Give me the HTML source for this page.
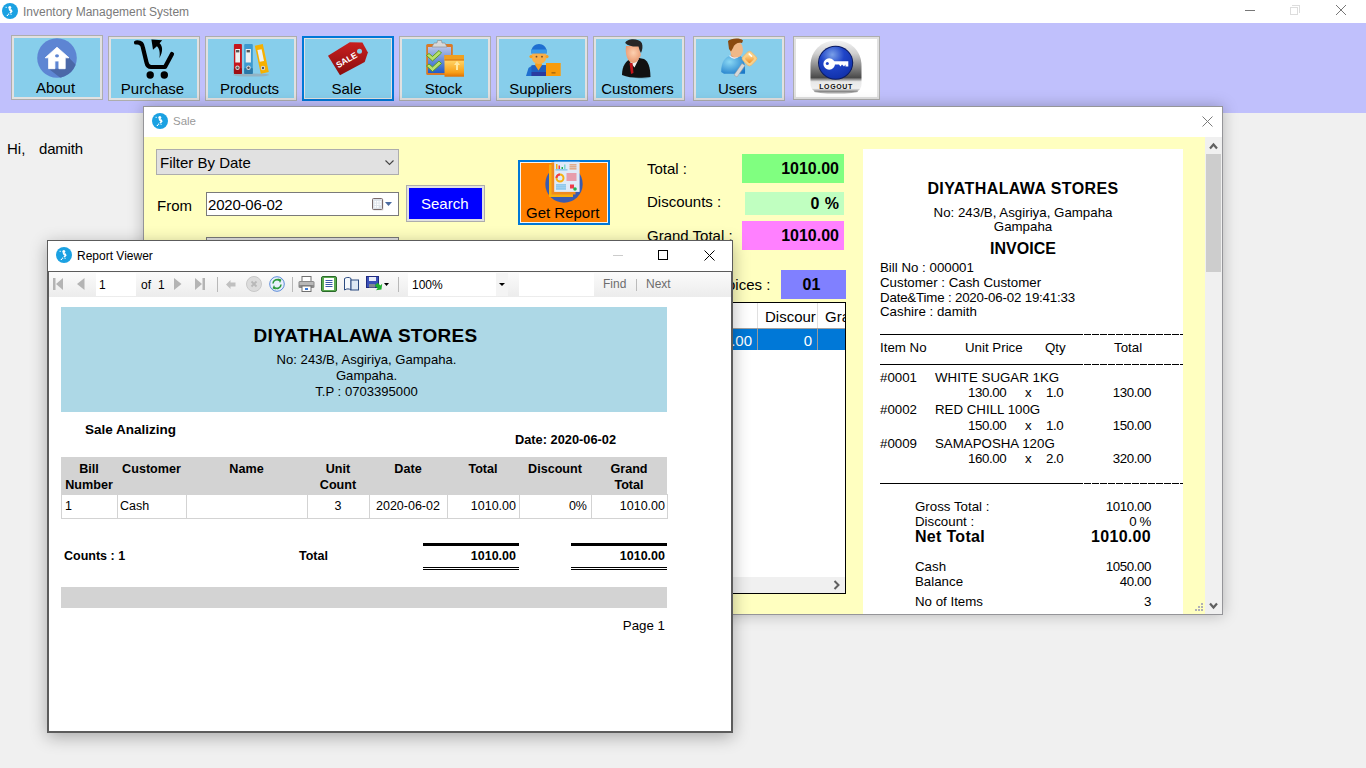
<!DOCTYPE html>
<html><head><meta charset="utf-8">
<style>
*{margin:0;padding:0;box-sizing:border-box}
html,body{width:1366px;height:768px;overflow:hidden;background:#f0f0f0;font-family:"Liberation Sans",sans-serif;position:relative}
.a{position:absolute}
.t{position:absolute;white-space:nowrap;line-height:1}
#titlebar{left:0;top:0;width:1366px;height:23px;background:#fff}
#toolbar{left:0;top:23px;width:1366px;height:90px;background:#c0c0fc}
.btn{position:absolute;top:36px;width:92px;height:65px;background:#87ceeb;border:1px solid #adadad;box-shadow:inset 0 0 0 2px #e1e1e1}
.btn .lbl{position:absolute;left:-3px;right:0;text-align:center;top:44px;font-size:15px;color:#000;line-height:1}
.win{position:absolute;background:#fff}
</style></head><body>
<!-- main title bar -->
<div id="titlebar" class="a">
  <svg class="a" style="left:2px;top:3px" width="16" height="16"><circle cx="8" cy="8" r="8" fill="#1ba1e2"/><g fill="#fff"><circle cx="7.8" cy="4.6" r="1.5"/><rect x="3.6" y="3.8" width="1.1" height="1.1"/><path d="M6.6 5.8L9.8 6.4L10.6 8.6L8.8 10.4L7.4 9.8L8.6 8.4L7.2 7.6Z"/><rect x="6" y="10.6" width="1.2" height="1.2"/><rect x="4.8" y="11.8" width="1.2" height="1.2"/><rect x="8.6" y="10.8" width="1" height="1"/></g></svg>
  <div class="t" style="left:23px;top:6px;font-size:12px;color:#7a7a7a">Inventory Management System</div>
  <div class="a" style="left:1245px;top:10px;width:10px;height:1px;background:#777"></div>
  <div class="a" style="left:1290px;top:7px;width:8px;height:8px;border:1px solid #ddd"></div>
  <div class="a" style="left:1292px;top:5px;width:8px;height:8px;border-top:1px solid #ddd;border-right:1px solid #ddd"></div>
  <svg class="a" style="left:1336px;top:5px" width="10" height="10"><path d="M0 0L10 10M10 0L0 10" stroke="#777" stroke-width="1"/></svg>
</div>
<div id="toolbar" class="a"></div>
<div class="btn" style="left:11px;top:35px"><div class="lbl">About</div></div>
<div class="btn" style="left:108px"><div class="lbl">Purchase</div></div>
<div class="btn" style="left:205px"><div class="lbl">Products</div></div>
<div class="btn" style="left:302px;border:2px solid #0078d7;box-shadow:inset 0 0 0 1px #e1e1e1"><div class="lbl" style="top:43px">Sale</div></div>
<div class="btn" style="left:399px"><div class="lbl">Stock</div></div>
<div class="btn" style="left:496px"><div class="lbl">Suppliers</div></div>
<div class="btn" style="left:593px"><div class="lbl">Customers</div></div>
<div class="btn" style="left:693px"><div class="lbl">Users</div></div>
<div class="btn" style="left:793px;width:87px;height:64px;background:#fff"></div>


<!-- ICONS -->
<svg class="a" style="left:37px;top:38px" width="40" height="40" viewBox="0 0 40 40">
 <defs><clipPath id="hc"><circle cx="20" cy="20" r="19.8"/></clipPath></defs>
 <circle cx="20" cy="20" r="19.8" fill="#5d85d3"/>
 <path clip-path="url(#hc)" d="M28.2 19.8L32 19.8L45 33L45 45L30 45L11.6 30.7L28.2 30.7Z" fill="#4b68a8"/>
 <path d="M20 9.2L8.2 19.8L11.6 19.8L11.6 30.7L17.9 30.7L17.9 23L21.9 23L21.9 30.7L28.2 30.7L28.2 19.8L32 19.8Z" fill="#fff" stroke="#fff" stroke-width="0.8" stroke-linejoin="round"/>
 <ellipse cx="20" cy="17.8" rx="2" ry="1.6" fill="#5d85d3"/>
</svg>
<svg class="a" style="left:130px;top:37px" width="48" height="44" viewBox="0 0 48 44">
 <path d="M6 5.5C10 5 12.5 7 13 11L16.5 25.5C17.2 28.8 18.5 30 21 30L35 30L42 17" fill="none" stroke="#000" stroke-width="4.2" stroke-linecap="round" stroke-linejoin="round"/>
 <circle cx="20.2" cy="38" r="3.7" fill="#000"/>
 <circle cx="34.3" cy="38" r="3.7" fill="#000"/>
 <path d="M21.4 2.4L32.2 3.3L29.6 6.3C32.5 9 33.5 14 29.4 21.3C30.5 15 29 11 26.9 9.3L23 12.8Z" fill="#000"/>
</svg>
<svg class="a" style="left:230px;top:42px" width="44" height="36" viewBox="0 0 44 36">
 <ellipse cx="21" cy="33" rx="18" ry="1.6" fill="#9aa8b0" opacity="0.7"/>
 <rect x="3.9" y="2" width="8" height="30" rx="1" fill="#c5161c"/>
 <rect x="3.9" y="26" width="8" height="6" rx="1" fill="#9e0f14"/>
 <rect x="5.3" y="7" width="4.7" height="13.5" fill="#eef0f0"/>
 <rect x="6" y="8" width="3.3" height="2.4" fill="#555"/>
 <circle cx="7.5" cy="25.8" r="2.2" fill="#ddd"/><circle cx="7.5" cy="25.8" r="1.2" fill="#555"/>
 <rect x="14.2" y="2" width="8.6" height="30" rx="1" fill="#3d9ad0"/>
 <rect x="14.2" y="26" width="8.6" height="6" rx="1" fill="#2a78a8"/>
 <rect x="15.7" y="7" width="5.2" height="13.5" fill="#eef0f0"/>
 <rect x="16.6" y="8" width="3.3" height="2.4" fill="#555"/>
 <circle cx="18.5" cy="25.8" r="2.2" fill="#ddd"/><circle cx="18.5" cy="25.8" r="1.2" fill="#555"/>
 <path d="M24.8 3.7L32.8 2L38.8 30.1L30.8 31.8Z" fill="#f6b000"/>
 <path d="M27.4 8L31.6 7.2L34 19L29.8 19.8Z" fill="#eef0f0"/>
 <circle cx="33" cy="26" r="2.2" fill="#ddd"/><circle cx="33" cy="26" r="1.2" fill="#555"/>
</svg>
<svg class="a" style="left:326px;top:40px" width="44" height="38" viewBox="0 0 44 38">
 <defs><linearGradient id="tg" x1="0" y1="0" x2="0" y2="1"><stop offset="0" stop-color="#c82020"/><stop offset="1" stop-color="#8a0c0c"/></linearGradient></defs>
 <path d="M2 15.8L23.8 2.3L36.4 2.6L41.9 12.6L38.7 22.1L14 35.3Z" fill="url(#tg)"/>
 <circle cx="33.5" cy="11.2" r="2.5" fill="#87ceeb"/>
 <text x="20" y="23" transform="rotate(-30 20 19)" font-family="Liberation Sans" font-weight="bold" font-size="8.5" fill="#fff" text-anchor="middle">SALE</text>
</svg>
<svg class="a" style="left:424px;top:38px" width="44" height="42" viewBox="0 0 44 42">
 <defs><linearGradient id="cb" x1="0" y1="0" x2="0" y2="1"><stop offset="0" stop-color="#b8c4e8"/><stop offset="1" stop-color="#1f5cc8"/></linearGradient>
 <linearGradient id="bx" x1="0" y1="0" x2="0" y2="1"><stop offset="0" stop-color="#f08a10"/><stop offset="0.3" stop-color="#ffd060"/><stop offset="0.8" stop-color="#f8a018"/><stop offset="1" stop-color="#e07000"/></linearGradient></defs>
 <rect x="2.2" y="6" width="26.6" height="31" rx="1.5" fill="#d87a28"/>
 <rect x="4" y="9" width="23" height="26" fill="url(#cb)"/>
 <path d="M8 9L10 5L13 5L13.5 2.5L17.5 2.5L18 5L21 5L23 9Z" fill="#d8d8d8" stroke="#888" stroke-width="0.6"/>
 <path d="M5 15.5L8.5 18.5L15 12.5L17.5 15L8.5 23L2.5 17.5Z" fill="#b8e070" stroke="#5a9a10" stroke-width="0.9"/>
 <path d="M5 26L8.5 29L15 23L17.5 25.5L8.5 33.5L2.5 28Z" fill="#b8e070" stroke="#5a9a10" stroke-width="0.9"/>
 <rect x="20.5" y="17" width="19.5" height="21.7" fill="url(#bx)"/><rect x="20.5" y="17" width="19.5" height="5" fill="#f0a020"/><rect x="20.5" y="21.5" width="19.5" height="1" fill="#d07010"/>
 <path d="M33 23L36 27L34 27L34 32L32 32L32 27L30 27Z" fill="#ffe8a0"/>
</svg>
<svg class="a" style="left:524px;top:39px" width="40" height="38" viewBox="0 0 40 38">
 <path d="M2 37L4.5 29C6 27.3 9 26.4 11 26.2L22 26.2L22 37Z" fill="#1f6fd0"/>
 <rect x="7.5" y="26.2" width="14.5" height="10.8" fill="#1f5ec0"/>
 <rect x="7.5" y="33" width="14.5" height="4" fill="#2a3aa0"/>
 <path d="M11 26L14.5 31.5L18 26L17 22L12 22Z" fill="#f7a020"/>
 <ellipse cx="15" cy="19" rx="7.2" ry="6" fill="#f8b04a"/>
 <rect x="7.8" y="14.5" width="14.4" height="5" fill="#f8b04a"/>
 <circle cx="7" cy="17.6" r="1.6" fill="#f7a020"/><circle cx="23" cy="17.6" r="1.6" fill="#f7a020"/>
 <path d="M7 14.3C7 2 23 2 23 14.3Z" fill="#1f6fd0"/>
 <rect x="7" y="10.5" width="16" height="3.8" fill="#3a9ae8"/>
 <circle cx="12.5" cy="17.7" r="0.9" fill="#6b4a2a"/><circle cx="18" cy="17.7" r="0.9" fill="#6b4a2a"/>
 <rect x="22" y="24" width="14.7" height="13" fill="#f99c0c"/>
 <rect x="27.5" y="33.5" width="4" height="0.8" fill="#6a4010"/>
</svg>
<svg class="a" style="left:620px;top:38px" width="34" height="41" viewBox="0 0 34 41">
 <defs><radialGradient id="fc" cx="0.5" cy="0.4" r="0.6"><stop offset="0" stop-color="#fcd0b0"/><stop offset="1" stop-color="#e89870"/></radialGradient></defs>
 <ellipse cx="22" cy="38.5" rx="9" ry="2" fill="#3a6070" opacity="0.35"/>
 <path d="M2 37C2 28 6 22 12 20.5L19 20L24 21C28 23 30.5 29 30.4 39C22 40 10 40.5 2 37Z" fill="#111"/>
 <path d="M10 24L14 21.5L19 20.5L14.5 29.5Z" fill="#eee"/>
 <path d="M9.5 25L12.5 25L13.5 35L11 36Z" fill="#c0141a"/>
 <path d="M6 8C5 16 7 22 11 24.5C15 26 18 23.5 19 20C21 19 21.5 16 20 14L19 8Z" fill="url(#fc)"/>
 <path d="M5.2 5C7 0 19 0 21.8 5C23 8 22.5 12 21 15C19.5 13 19 10 18.5 8.5C14 9 8 8 5.2 5Z" fill="#262626"/>
</svg>
<svg class="a" style="left:719px;top:38px" width="42" height="40" viewBox="0 0 42 40">
 <defs><radialGradient id="bd" cx="0.35" cy="0.35" r="0.8"><stop offset="0" stop-color="#8ad8f4"/><stop offset="1" stop-color="#1a78c8"/></radialGradient>
 <linearGradient id="ky" x1="0" y1="0" x2="1" y2="1"><stop offset="0" stop-color="#ffe0a0"/><stop offset="1" stop-color="#f08a20"/></linearGradient></defs>
 <path d="M2.2 34C2 24 6 19 12 17.5L20 17.5C25 19.5 26.5 26 26 35.8L5 35.8Z" fill="url(#bd)"/>
 <path d="M11.5 17.5L15 21L19.5 17.5L18 14L13 14Z" fill="#e8a070"/><path d="M10.5 17.6Q15 22.5 20.5 17.6" fill="none" stroke="#e8f0ff" stroke-width="1.2"/>
 <ellipse cx="17.5" cy="11.5" rx="6.5" ry="8" fill="#f0b888"/>
 <path d="M9 3C12 0 21 -0.5 24 2.5L23 5C19 4 15 6 14 10L12 13.5L10 11Z" fill="#8a4a10"/>
 <path d="M15 37L23 25.5L26 27.5L18 39Z" fill="#d8d8d8" stroke="#999" stroke-width="0.5"/>
 <rect x="24.5" y="14.6" width="12" height="12" rx="3" transform="rotate(45 30.5 20.6)" fill="#f8d088" stroke="#f0b060" stroke-width="0.6"/>
 <rect x="27" y="17.1" width="7" height="7" rx="1.2" transform="rotate(45 30.5 20.6)" fill="url(#ky)"/>
 <rect x="29" y="16" width="4.5" height="1.6" transform="rotate(45 31 17)" fill="#fff"/>
</svg>
<svg class="a" style="left:810px;top:40px" width="52" height="54" viewBox="0 0 52 54">
 <defs><linearGradient id="sv" x1="0" y1="0" x2="0" y2="1"><stop offset="0" stop-color="#f4f4f4"/><stop offset="0.25" stop-color="#d0d0d0"/><stop offset="0.55" stop-color="#7a7a7a"/><stop offset="0.72" stop-color="#4a4a4a"/><stop offset="0.8" stop-color="#e8e8e8"/><stop offset="0.93" stop-color="#f0f0f0"/><stop offset="1" stop-color="#7a7a7a"/></linearGradient>
 <radialGradient id="bl" cx="0.4" cy="0.25" r="0.8"><stop offset="0" stop-color="#7aa0e8"/><stop offset="0.45" stop-color="#1f44c8"/><stop offset="1" stop-color="#1030a8"/></radialGradient></defs>
 <ellipse cx="26" cy="51.5" rx="22" ry="2" fill="#555" opacity="0.5"/>
 <path d="M0.5 26C0.5 10 12 0.5 26 0.5C40 0.5 51.5 10 51.5 26L51.5 44C51.5 49 48 52 43 52L9 52C4 52 0.5 49 0.5 44Z" fill="url(#sv)"/>
 <ellipse cx="25.6" cy="22.7" rx="17.6" ry="17" fill="#0a1a60"/>
 <ellipse cx="25.6" cy="22.7" rx="16.6" ry="16" fill="url(#bl)"/>
 <circle cx="19.2" cy="24" r="5.8" fill="#fff"/>
 <circle cx="17.3" cy="23.5" r="1.5" fill="#1f44c8"/>
 <path d="M23 21.3L38.3 21.3L38.3 26.5L35.5 26.5L35.5 24.5L34 26.5L32 24.5L30.5 26.5L29 24.5L23 24.5Z" fill="#fff"/>
 <text x="26" y="49.3" font-family="Liberation Sans" font-weight="bold" font-size="7" letter-spacing="0.6" fill="#111" text-anchor="middle">LOGOUT</text>
</svg>

<div class="t" style="left:7px;top:141px;font-size:15px;color:#000">Hi,</div><div class="t" style="left:39px;top:141px;font-size:15px;color:#000;letter-spacing:-0.2px">damith</div>

<!-- SALE WINDOW -->
<div class="win" id="sale" style="left:143px;top:106px;width:1080px;height:509px;border:1px solid #959599;box-shadow:0 0 14px rgba(0,0,0,0.25)"></div>
<svg class="a" style="left:152px;top:113px" width="16" height="16"><circle cx="8" cy="8" r="8" fill="#1ba1e2"/><g fill="#fff"><circle cx="7.8" cy="4.6" r="1.5"/><rect x="3.6" y="3.8" width="1.1" height="1.1"/><path d="M6.6 5.8L9.8 6.4L10.6 8.6L8.8 10.4L7.4 9.8L8.6 8.4L7.2 7.6Z"/><rect x="6" y="10.6" width="1.2" height="1.2"/><rect x="4.8" y="11.8" width="1.2" height="1.2"/><rect x="8.6" y="10.8" width="1" height="1"/></g></svg>
<div class="t" style="left:173px;top:116px;font-size:11.5px;color:#999">Sale</div>
<svg class="a" style="left:1202px;top:116px" width="11" height="11"><path d="M0.5 0.5L10.5 10.5M10.5 0.5L0.5 10.5" stroke="#7a7a7a" stroke-width="1"/></svg>
<div class="a" style="left:144px;top:137px;width:1061px;height:477px;background:#ffffc0"></div>
<!-- vscroll -->
<div class="a" style="left:1205px;top:137px;width:17px;height:477px;background:#f0f0f0"></div>
<div class="a" style="left:1206px;top:154px;width:15px;height:118px;background:#cdcdcd"></div>
<svg class="a" style="left:1209px;top:142px" width="9" height="8"><path d="M1 6.5L4.5 2.5L8 6.5" stroke="#606060" stroke-width="2.2" fill="none"/></svg>
<svg class="a" style="left:1209px;top:602px" width="9" height="8"><path d="M1 1.5L4.5 5.5L8 1.5" stroke="#606060" stroke-width="2.2" fill="none"/></svg>
<!-- controls -->
<div class="a" style="left:156px;top:149px;width:243px;height:26px;background:#e1e1e1;border:1px solid #adadad"></div>
<div class="t" style="left:160px;top:155px;font-size:15px">Filter By Date</div>
<svg class="a" style="left:385px;top:160px" width="10" height="6"><path d="M0.5 0.5L4.5 4.5L8.5 0.5" stroke="#444" stroke-width="1.1" fill="none"/></svg>
<div class="t" style="left:157px;top:198px;font-size:15px">From</div>
<div class="a" style="left:206px;top:192px;width:193px;height:24px;background:#fff;border:1px solid #7a7a7a"></div>
<div class="t" style="left:208px;top:197px;font-size:15px;letter-spacing:-0.2px">2020-06-02</div>
<svg class="a" style="left:372px;top:198px" width="12" height="13"><rect x="1" y="1" width="10.5" height="11.5" rx="1" fill="#c8c8c8" opacity="0.6"/><rect x="0.5" y="0.5" width="10" height="11" rx="1" fill="#dde3ea" stroke="#7a6a6a"/><g fill="#fff"><rect x="2.5" y="3" width="1.6" height="1.6"/><rect x="5" y="3" width="1.6" height="1.6"/><rect x="7.5" y="3" width="1.6" height="1.6"/><rect x="2.5" y="5.5" width="1.6" height="1.6"/><rect x="5" y="5.5" width="1.6" height="1.6"/><rect x="7.5" y="5.5" width="1.6" height="1.6"/><rect x="2.5" y="8" width="1.6" height="1.6"/><rect x="5" y="8" width="1.6" height="1.6"/></g></svg>
<svg class="a" style="left:385px;top:202px" width="7" height="4"><path d="M0 0H7L3.5 4Z" fill="#4a6aa0"/></svg>
<div class="a" style="left:206px;top:237px;width:193px;height:10px;background:#e1e1e1;border:1px solid #7a7a7a"></div>
<div class="a" style="left:406px;top:185px;width:79px;height:37px;background:#e1e1e1;border:1px solid #adadad"></div>
<div class="a" style="left:409px;top:188px;width:73px;height:31px;background:#0000ff"></div>
<div class="t" style="left:421px;top:196px;font-size:15px;color:#fff">Search</div>
<div class="a" style="left:518px;top:160px;width:92px;height:65px;background:#ff8000;border:2px solid #0078d7;box-shadow:inset 0 0 0 1px #f4f4f4"></div>
<div class="t" style="left:526px;top:205px;font-size:15px">Get Report</div>
<svg class="a" style="left:545px;top:161px" width="40" height="42" viewBox="0 0 40 42">
 <circle cx="19" cy="23" r="18.7" fill="#3a5bb0"/>
 <rect x="4" y="3.5" width="24" height="32.5" fill="#f8b010"/>
 <rect x="6.5" y="1.5" width="24" height="32" fill="#f08a20"/>
 <rect x="9.2" y="0.7" width="25.4" height="30.2" fill="#dfeaf8"/>
 <rect x="11" y="3" width="1.5" height="5" fill="#f8b010"/><rect x="13.5" y="4.5" width="1.5" height="3.5" fill="#f03a4a"/><rect x="16.5" y="6" width="1.5" height="2" fill="#20b050"/><rect x="19" y="3.5" width="1.5" height="4.5" fill="#80d8d0"/>
 <rect x="10.5" y="8.5" width="12" height="0.8" fill="#40a8e0"/>
 <rect x="24.5" y="3.5" width="7" height="0.8" fill="#e07020"/><rect x="24.5" y="5.5" width="7" height="0.8" fill="#e07020"/><rect x="24.5" y="7.5" width="7" height="0.8" fill="#e07020"/>
 <circle cx="15" cy="17" r="3.5" fill="none" stroke="#f8b010" stroke-width="2"/>
 <path d="M11.5 17A3.5 3.5 0 0 1 15 13.5" fill="none" stroke="#f03a4a" stroke-width="2"/>
 <rect x="21.5" y="12.5" width="10" height="1" fill="#f05060"/><rect x="21.5" y="14.5" width="10" height="1" fill="#f05060"/><rect x="21.5" y="16.5" width="10" height="1" fill="#f05060"/><rect x="21.5" y="18.5" width="10" height="1" fill="#f05060"/>
 <rect x="11" y="23.5" width="10" height="0.9" fill="#40a8e0"/><rect x="11" y="25.5" width="10" height="0.9" fill="#40a8e0"/><rect x="11" y="27.5" width="10" height="0.9" fill="#40a8e0"/>
 <rect x="25" y="23.5" width="4" height="4" fill="#f03a4a"/><circle cx="30" cy="28" r="1.8" fill="#20b050"/>
</svg>
<!-- totals -->
<div class="t" style="left:647px;top:161px;font-size:15px">Total :</div>
<div class="a" style="left:742px;top:154px;width:102px;height:29px;background:#80ff80"></div>
<div class="t" style="left:742px;width:97px;text-align:right;top:161px;font-size:16px;font-weight:bold">1010.00</div>
<div class="t" style="left:647px;top:194px;font-size:15px">Discounts :</div>
<div class="a" style="left:745px;top:192px;width:99px;height:23px;background:#c0ffc0"></div>
<div class="t" style="left:745px;width:94px;text-align:right;top:196px;font-size:16px;font-weight:bold;word-spacing:1px">0 %</div>
<div class="t" style="left:647px;top:228px;font-size:15px">Grand Total :</div>
<div class="a" style="left:742px;top:221px;width:102px;height:29px;background:#ff80ff"></div>
<div class="t" style="left:742px;width:97px;text-align:right;top:228px;font-size:16px;font-weight:bold">1010.00</div>
<div class="t" style="left:707px;top:277px;font-size:15px">Invoices :</div>
<div class="a" style="left:781px;top:270px;width:65px;height:29px;background:#8080ff"></div>
<div class="t" style="left:779px;width:65px;text-align:center;top:277px;font-size:16px;font-weight:bold">01</div>
<!-- grid -->
<div class="a" style="left:640px;top:302px;width:206px;height:292px;background:#fff;border:1px solid #000"></div>
<div class="a" style="left:641px;top:328px;width:204px;height:1px;background:#a0a0a0"></div>
<div class="a" style="left:757px;top:303px;width:1px;height:25px;background:#e0e0e0"></div>
<div class="a" style="left:817px;top:303px;width:1px;height:25px;background:#e0e0e0"></div>
<div class="t" style="left:765px;top:309px;font-size:15px">Discour</div>
<div class="a" style="left:818px;top:303px;width:27px;height:25px;overflow:hidden"><div class="t" style="left:7px;top:6px;font-size:15px">Gra</div></div>
<div class="a" style="left:641px;top:329px;width:204px;height:21px;background:#0078d7"></div>
<div class="a" style="left:757px;top:329px;width:1px;height:21px;background:#9a9a9a"></div>
<div class="a" style="left:817px;top:329px;width:1px;height:21px;background:#9a9a9a"></div>
<div class="t" style="left:641px;width:111px;text-align:right;top:333px;font-size:15px;color:#fff">1010.00</div>
<div class="t" style="left:758px;width:54px;text-align:right;top:333px;font-size:15px;color:#fff">0</div>
<div class="a" style="left:641px;top:577px;width:204px;height:16px;background:#f0f0f0"></div>
<svg class="a" style="left:833px;top:580px" width="7" height="10"><path d="M1.5 1L5.5 5L1.5 9" stroke="#606060" stroke-width="2" fill="none"/></svg>
<!-- receipt -->
<div class="a" style="left:863px;top:149px;width:320px;height:465px;background:#fff"></div>
<div class="t" style="left:863px;width:320px;text-align:center;top:181px;font-size:16px;font-weight:bold;letter-spacing:0.4px">DIYATHALAWA STORES</div>
<div class="t" style="left:863px;width:320px;text-align:center;top:206px;font-size:13.3px">No: 243/B, Asgiriya, Gampaha</div>
<div class="t" style="left:863px;width:320px;text-align:center;top:220px;font-size:13.3px">Gampaha</div>
<div class="t" style="left:863px;width:320px;text-align:center;top:241px;font-size:16px;font-weight:bold">INVOICE</div>
<div class="t" style="left:880px;top:261px;font-size:13.3px">Bill No : 000001</div>
<div class="t" style="left:880px;top:276px;font-size:13.3px">Customer : Cash Customer</div>
<div class="t" style="left:880px;top:291px;font-size:13.3px;letter-spacing:-0.18px">Date&amp;Time : 2020-06-02 19:41:33</div>
<div class="t" style="left:880px;top:305px;font-size:13.3px">Cashire : damith</div>
<div class="a" style="left:880px;top:334px;width:196px;height:1px;background:#000"></div>
<div class="a" style="left:1076px;top:334px;width:107px;height:1px;background:repeating-linear-gradient(90deg,#000 0 7px,#fff 7px 8px)"></div>
<div class="t" style="left:880px;top:341px;font-size:13.3px">Item No</div>
<div class="t" style="left:965px;top:341px;font-size:13.3px">Unit Price</div>
<div class="t" style="left:1045px;top:341px;font-size:13.3px">Qty</div>
<div class="t" style="left:1114px;top:341px;font-size:13.3px">Total</div>
<div class="a" style="left:880px;top:364px;width:196px;height:1px;background:#000"></div>
<div class="a" style="left:1076px;top:364px;width:107px;height:1px;background:repeating-linear-gradient(90deg,#000 0 7px,#fff 7px 8px)"></div>
<div class="t" style="left:880px;top:371px;font-size:13.3px">#0001</div>
<div class="t" style="left:935px;top:371px;font-size:13.3px">WHITE SUGAR 1KG</div>
<div class="t" style="left:968px;top:386px;font-size:13.3px;letter-spacing:-0.4px">130.00</div>
<div class="t" style="left:1025px;top:386px;font-size:13.3px;letter-spacing:-0.4px">x</div>
<div class="t" style="left:1046px;top:386px;font-size:13.3px;letter-spacing:-0.4px">1.0</div>
<div class="t" style="left:1051px;width:100px;text-align:right;top:386px;font-size:13.3px;letter-spacing:-0.4px">130.00</div>
<div class="t" style="left:880px;top:403px;font-size:13.3px">#0002</div>
<div class="t" style="left:935px;top:403px;font-size:13.3px">RED CHILL 100G</div>
<div class="t" style="left:968px;top:419px;font-size:13.3px;letter-spacing:-0.4px">150.00</div>
<div class="t" style="left:1025px;top:419px;font-size:13.3px;letter-spacing:-0.4px">x</div>
<div class="t" style="left:1046px;top:419px;font-size:13.3px;letter-spacing:-0.4px">1.0</div>
<div class="t" style="left:1051px;width:100px;text-align:right;top:419px;font-size:13.3px;letter-spacing:-0.4px">150.00</div>
<div class="t" style="left:880px;top:437px;font-size:13.3px">#0009</div>
<div class="t" style="left:935px;top:437px;font-size:13.3px">SAMAPOSHA 120G</div>
<div class="t" style="left:968px;top:452px;font-size:13.3px;letter-spacing:-0.4px">160.00</div>
<div class="t" style="left:1025px;top:452px;font-size:13.3px;letter-spacing:-0.4px">x</div>
<div class="t" style="left:1046px;top:452px;font-size:13.3px;letter-spacing:-0.4px">2.0</div>
<div class="t" style="left:1051px;width:100px;text-align:right;top:452px;font-size:13.3px;letter-spacing:-0.4px">320.00</div>
<div class="a" style="left:880px;top:483px;width:196px;height:1px;background:#000"></div>
<div class="a" style="left:1076px;top:483px;width:107px;height:1px;background:repeating-linear-gradient(90deg,#000 0 7px,#fff 7px 8px)"></div>
<div class="t" style="left:915px;top:500px;font-size:13.3px">Gross Total :</div>
<div class="t" style="left:1051px;width:100px;text-align:right;top:500px;font-size:13.3px;letter-spacing:-0.4px">1010.00</div>
<div class="t" style="left:915px;top:515px;font-size:13.3px">Discount :</div>
<div class="t" style="left:1051px;width:100px;text-align:right;top:515px;font-size:13.3px;letter-spacing:-0.4px">0 %</div>
<div class="t" style="left:915px;top:529px;font-size:16px;font-weight:bold;letter-spacing:0.3px">Net Total</div>
<div class="t" style="left:1051px;width:100px;text-align:right;top:529px;font-size:16px;font-weight:bold;letter-spacing:0.3px">1010.00</div>
<div class="t" style="left:915px;top:560px;font-size:13.3px">Cash</div>
<div class="t" style="left:1051px;width:100px;text-align:right;top:560px;font-size:13.3px;letter-spacing:-0.4px">1050.00</div>
<div class="t" style="left:915px;top:575px;font-size:13.3px">Balance</div>
<div class="t" style="left:1051px;width:100px;text-align:right;top:575px;font-size:13.3px;letter-spacing:-0.4px">40.00</div>
<div class="t" style="left:915px;top:595px;font-size:13.3px">No of Items</div>
<div class="t" style="left:1051px;width:100px;text-align:right;top:595px;font-size:13.3px;letter-spacing:-0.4px">3</div>
<svg class="a" style="left:1195px;top:603px" width="9" height="9"><g fill="#b0b0b8"><rect x="6" y="0" width="2" height="2"/><rect x="3" y="3" width="2" height="2"/><rect x="6" y="3" width="2" height="2"/><rect x="0" y="6" width="2" height="2"/><rect x="3" y="6" width="2" height="2"/><rect x="6" y="6" width="2" height="2"/></g></svg>


<!-- REPORT VIEWER -->
<div class="win" id="rv" style="left:47px;top:240px;width:686px;height:493px;border:1px solid #5c5c5c;box-shadow:0 4px 16px rgba(0,0,0,0.3)"></div>
<svg class="a" style="left:56px;top:247px" width="16" height="16"><circle cx="8" cy="8" r="8" fill="#1ba1e2"/><g fill="#fff"><circle cx="7.8" cy="4.6" r="1.5"/><rect x="3.6" y="3.8" width="1.1" height="1.1"/><path d="M6.6 5.8L9.8 6.4L10.6 8.6L8.8 10.4L7.4 9.8L8.6 8.4L7.2 7.6Z"/><rect x="6" y="10.6" width="1.2" height="1.2"/><rect x="4.8" y="11.8" width="1.2" height="1.2"/><rect x="8.6" y="10.8" width="1" height="1"/></g></svg>
<div class="t" style="left:77px;top:250px;font-size:12px;color:#000">Report Viewer</div>
<div class="a" style="left:613px;top:255px;width:10px;height:1px;background:#ccc"></div>
<div class="a" style="left:658px;top:250px;width:10px;height:10px;border:1px solid #000"></div>
<svg class="a" style="left:704px;top:250px" width="11" height="11"><path d="M0.5 0.5L10.5 10.5M10.5 0.5L0.5 10.5" stroke="#000" stroke-width="1"/></svg>
<div class="a" style="left:48px;top:271px;width:684px;height:461px;border:1px solid #5c5c5c"></div>
<div class="a" style="left:49px;top:272px;width:682px;height:25px;background:linear-gradient(#fbfbfb,#ececec)"></div>
<div class="a" style="left:96px;top:273px;width:40px;height:23px;background:#fff"></div>
<!-- RV toolbar icons -->
<svg class="a" style="left:53px;top:278px" width="11" height="13"><rect x="0" y="0" width="2.5" height="12" fill="#b4b4b4"/><path d="M10 0L10 12L3 6Z" fill="#b4b4b4"/></svg>
<svg class="a" style="left:77px;top:278px" width="8" height="13"><path d="M7.5 0L7.5 12L0 6Z" fill="#b4b4b4"/></svg>
<svg class="a" style="left:174px;top:278px" width="8" height="13"><path d="M0 0L0 12L7.5 6Z" fill="#b4b4b4"/></svg>
<svg class="a" style="left:195px;top:278px" width="11" height="13"><path d="M0 0L0 12L7 6Z" fill="#b4b4b4"/><rect x="7.5" y="0" width="2.5" height="12" fill="#b4b4b4"/></svg>
<div class="a" style="left:217px;top:277px;width:1px;height:15px;background:#b8b8b8"></div>
<svg class="a" style="left:226px;top:280px" width="10" height="9"><path d="M0 4.5L4.5 0L4.5 2.5L9.5 2.5L9.5 6.5L4.5 6.5L4.5 9Z" fill="#c0c0c0"/></svg>
<svg class="a" style="left:246px;top:276px" width="16" height="16"><circle cx="8" cy="8" r="7.5" fill="#dcdcdc" stroke="#c8c8c8"/><path d="M5.5 5.5L10.5 10.5M10.5 5.5L5.5 10.5" stroke="#b8b8b8" stroke-width="1.8"/></svg>
<svg class="a" style="left:269px;top:276px" width="16" height="16"><circle cx="8" cy="8" r="7.3" fill="#e8f0fc" stroke="#5a8ad8" stroke-width="1"/><path d="M4 7.5A4 4 0 0 1 10.5 4.5" fill="none" stroke="#2a9a3a" stroke-width="1.6"/><path d="M9 2.5L12.5 3.5L11 7Z" fill="#2a9a3a"/><path d="M12 8.5A4 4 0 0 1 5.5 11.5" fill="none" stroke="#2a9a3a" stroke-width="1.6"/><path d="M7 13.5L3.5 12.5L5 9Z" fill="#2a9a3a"/></svg>
<div class="a" style="left:292px;top:277px;width:1px;height:15px;background:#b8b8b8"></div>
<svg class="a" style="left:298px;top:276px" width="17" height="16"><rect x="4" y="0.5" width="9" height="5" fill="#fff" stroke="#707070"/><rect x="0.5" y="5" width="16" height="7" rx="1.5" fill="#8a8a8a"/><rect x="1.5" y="6" width="14" height="3" fill="#b8b8b8"/><rect x="4" y="10" width="9" height="5.5" fill="#fff" stroke="#707070"/><rect x="7" y="12" width="3" height="2" fill="#3a7ad8"/></svg>
<svg class="a" style="left:321px;top:276px" width="16" height="16"><rect x="0.5" y="0.5" width="15" height="15" rx="1.5" fill="#5aaa50" stroke="#2a6a2a"/><rect x="3" y="2" width="10" height="12" fill="#fff"/><path d="M4.5 4.5H11.5M4.5 6.5H11.5M4.5 8.5H11.5M4.5 10.5H11.5" stroke="#3a5aa8" stroke-width="1"/></svg>
<svg class="a" style="left:344px;top:277px" width="15" height="14"><path d="M0.5 1.5C3 0 5 0 7 1.5L7 13C5 11.5 3 11.5 0.5 13Z" fill="#f4f8fc" stroke="#2a4a80"/><rect x="7" y="3" width="7.5" height="10" fill="#dce8f4" stroke="#2a4a80"/></svg>
<svg class="a" style="left:366px;top:276px" width="17" height="17"><rect x="0.5" y="0.5" width="12" height="11" fill="#3a50b8" stroke="#202a80"/><rect x="3" y="1" width="7" height="4" fill="#e8ecf8"/><rect x="3" y="8" width="6" height="3.5" fill="#808890"/><path d="M9 9L13 9L13 6.5L16.5 11L13 15.5L13 13L9 13Z" fill="#20b030" transform="rotate(45 13 11)"/></svg>
<svg class="a" style="left:384px;top:283px" width="6" height="3"><path d="M0 0H5L2.5 3Z" fill="#000"/></svg>
<div class="a" style="left:398px;top:277px;width:1px;height:15px;background:#b8b8b8"></div>

<div class="t" style="left:99px;top:279px;font-size:12px">1</div>
<div class="t" style="left:141px;top:279px;font-size:12px">of</div>
<div class="t" style="left:158px;top:279px;font-size:12px">1</div>
<div class="a" style="left:408px;top:273px;width:100px;height:23px;background:#fff"></div>
<div class="a" style="left:496px;top:273px;width:12px;height:23px;background:#f4f4f4"></div>
<div class="t" style="left:412px;top:279px;font-size:12px">100%</div>
<svg class="a" style="left:499px;top:283px" width="6" height="3"><path d="M0 0H6L3 3Z" fill="#000"/></svg>
<div class="a" style="left:519px;top:273px;width:75px;height:23px;background:#fff"></div>
<div class="t" style="left:603px;top:278px;font-size:12px;color:#6d6d6d">Find</div>
<div class="a" style="left:636px;top:279px;width:1px;height:12px;background:#bbb"></div>
<div class="t" style="left:646px;top:278px;font-size:12px;color:#6d6d6d">Next</div>
<!-- page -->
<div class="a" style="left:61px;top:307px;width:606px;height:105px;background:#add8e6"></div>
<div class="t" style="left:61px;width:606px;text-align:center;top:326px;font-size:19px;font-weight:bold;padding-left:3px;letter-spacing:0.3px">DIYATHALAWA STORES</div>
<div class="t" style="left:61px;width:606px;text-align:center;top:353px;font-size:13.1px;padding-left:5px">No: 243/B, Asgiriya, Gampaha.</div>
<div class="t" style="left:61px;width:606px;text-align:center;top:369px;font-size:13.1px;padding-left:5px">Gampaha.</div>
<div class="t" style="left:61px;width:606px;text-align:center;top:385px;font-size:13.1px;padding-left:5px">T.P : 0703395000</div>
<div class="t" style="left:85px;top:423px;font-size:13.5px;font-weight:bold">Sale Analizing</div>
<div class="t" style="left:515px;top:434px;font-size:12.8px;font-weight:bold">Date: 2020-06-02</div>
<div class="a" style="left:61px;top:457px;width:606px;height:38px;background:#d3d3d3"></div>
<div class="a" style="left:61px;top:494px;width:607px;height:25px;border:1px solid #d3d3d3;background:#fff"></div>
<div class="a" style="left:117px;top:495px;width:1px;height:23px;background:#d3d3d3"></div>
<div class="a" style="left:186px;top:495px;width:1px;height:23px;background:#d3d3d3"></div>
<div class="a" style="left:307px;top:495px;width:1px;height:23px;background:#d3d3d3"></div>
<div class="a" style="left:369px;top:495px;width:1px;height:23px;background:#d3d3d3"></div>
<div class="a" style="left:447px;top:495px;width:1px;height:23px;background:#d3d3d3"></div>
<div class="a" style="left:519px;top:495px;width:1px;height:23px;background:#d3d3d3"></div>
<div class="a" style="left:591px;top:495px;width:1px;height:23px;background:#d3d3d3"></div>
<div class="t" style="left:61px;width:56px;text-align:center;top:463px;font-size:12.6px;font-weight:bold">Bill</div>
<div class="t" style="left:61px;width:56px;text-align:center;top:479px;font-size:12.6px;font-weight:bold">Number</div>
<div class="t" style="left:117px;width:69px;text-align:center;top:463px;font-size:12.6px;font-weight:bold">Customer</div>
<div class="t" style="left:186px;width:121px;text-align:center;top:463px;font-size:12.6px;font-weight:bold">Name</div>
<div class="t" style="left:307px;width:62px;text-align:center;top:463px;font-size:12.6px;font-weight:bold">Unit</div>
<div class="t" style="left:307px;width:62px;text-align:center;top:479px;font-size:12.6px;font-weight:bold">Count</div>
<div class="t" style="left:369px;width:78px;text-align:center;top:463px;font-size:12.6px;font-weight:bold">Date</div>
<div class="t" style="left:447px;width:72px;text-align:center;top:463px;font-size:12.6px;font-weight:bold">Total</div>
<div class="t" style="left:519px;width:72px;text-align:center;top:463px;font-size:12.6px;font-weight:bold">Discount</div>
<div class="t" style="left:591px;width:76px;text-align:center;top:463px;font-size:12.6px;font-weight:bold">Grand</div>
<div class="t" style="left:591px;width:76px;text-align:center;top:479px;font-size:12.6px;font-weight:bold">Total</div>
<div class="t" style="left:65px;top:500px;font-size:12.5px">1</div>
<div class="t" style="left:120px;top:500px;font-size:12.5px">Cash</div>
<div class="t" style="left:307px;width:62px;text-align:center;top:500px;font-size:12.5px">3</div>
<div class="t" style="left:376px;top:500px;font-size:12.5px">2020-06-02</div>
<div class="t" style="left:447px;width:69px;text-align:right;top:500px;font-size:12.5px">1010.00</div>
<div class="t" style="left:519px;width:68px;text-align:right;top:500px;font-size:12.5px">0%</div>
<div class="t" style="left:591px;width:74px;text-align:right;top:500px;font-size:12.5px">1010.00</div>
<div class="t" style="left:64px;top:550px;font-size:12.5px;font-weight:bold">Counts : 1</div>
<div class="t" style="left:299px;top:550px;font-size:12.5px;font-weight:bold">Total</div>
<div class="a" style="left:423px;top:543px;width:96px;height:3px;background:#000"></div>
<div class="a" style="left:423px;top:567px;width:96px;height:1px;background:#000"></div>
<div class="a" style="left:423px;top:569px;width:96px;height:1px;background:#000"></div>
<div class="a" style="left:571px;top:543px;width:96px;height:3px;background:#000"></div>
<div class="a" style="left:571px;top:567px;width:96px;height:1px;background:#000"></div>
<div class="a" style="left:571px;top:569px;width:96px;height:1px;background:#000"></div>
<div class="t" style="left:423px;width:93px;text-align:right;top:550px;font-size:12.5px;font-weight:bold">1010.00</div>
<div class="t" style="left:571px;width:94px;text-align:right;top:550px;font-size:12.5px;font-weight:bold">1010.00</div>
<div class="a" style="left:61px;top:587px;width:606px;height:21px;background:#d3d3d3"></div>
<div class="t" style="left:565px;width:100px;text-align:right;top:619px;font-size:13.3px">Page 1</div>

</body></html>
